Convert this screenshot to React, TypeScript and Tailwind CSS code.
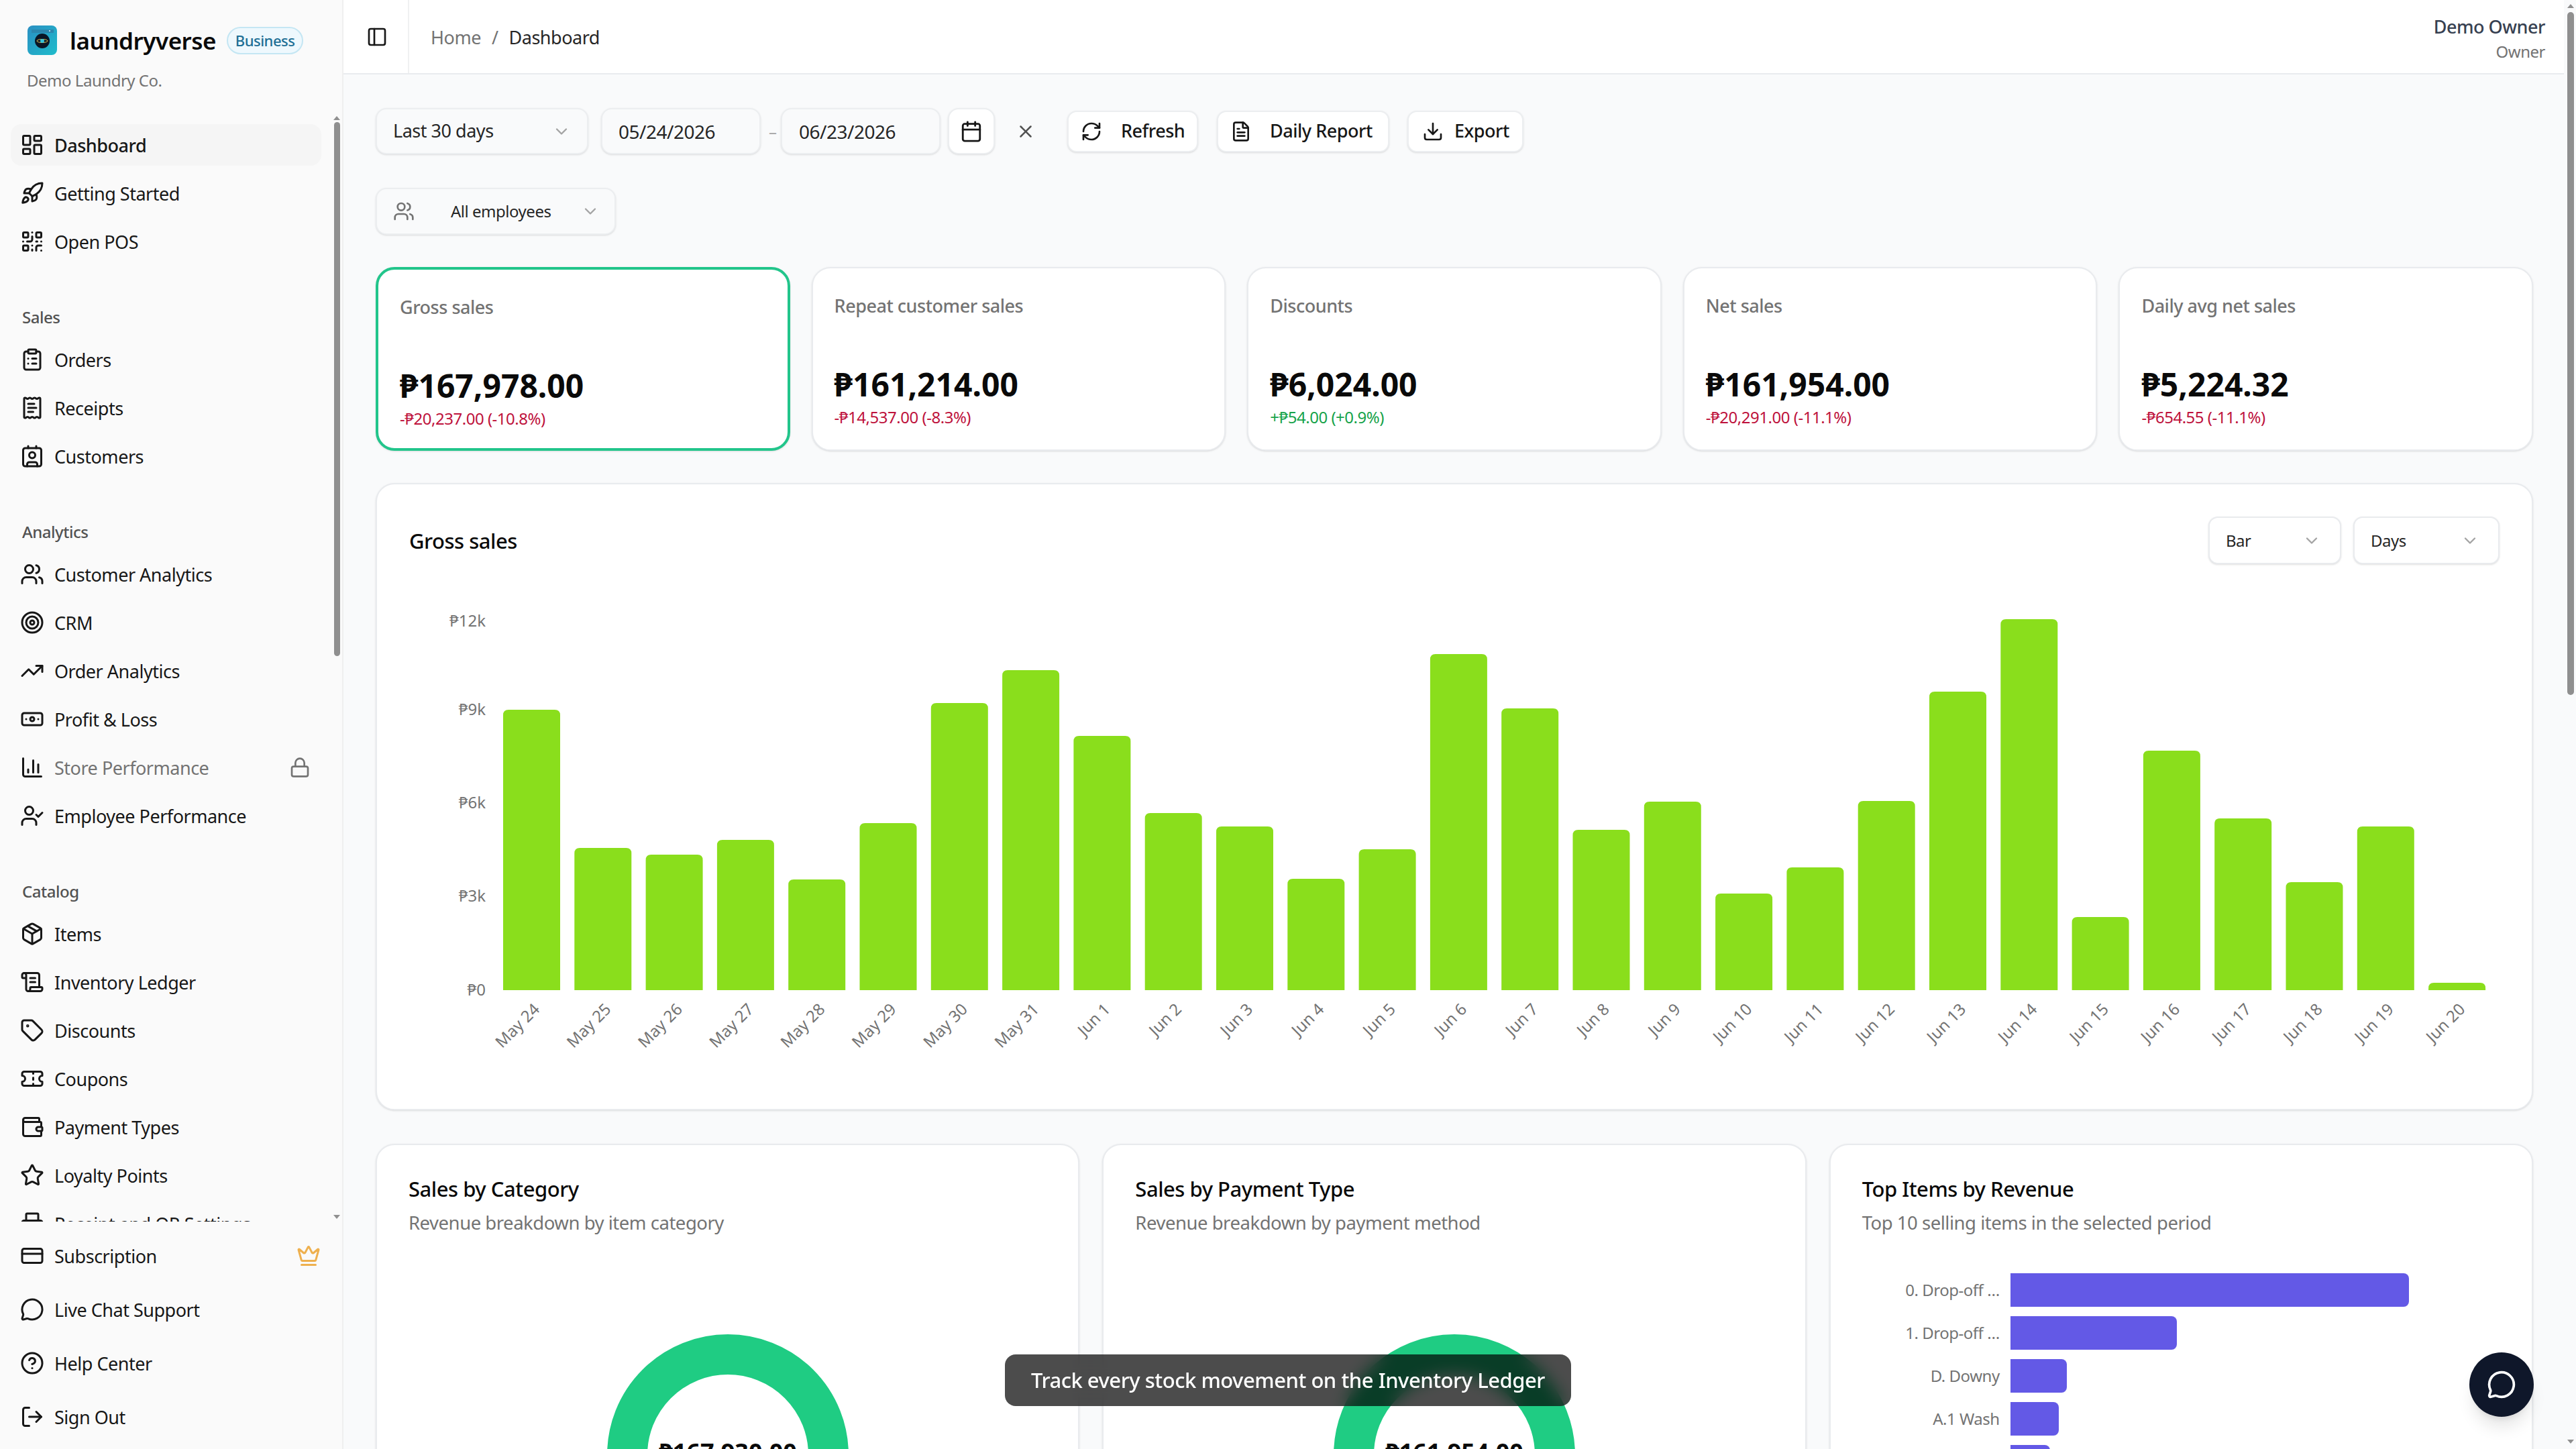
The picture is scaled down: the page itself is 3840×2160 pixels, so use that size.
import {
  LayoutDashboard, Rocket, QrCode, ClipboardList, ReceiptText, Contact, Users, Target, TrendingUp, Banknote,
  ChartColumn, UserCheck, Package, ScrollText, Tag, Ticket, Wallet, Star, Printer, CreditCard, MessageCircle,
  CircleHelp, LogOut, Crown, Lock, PanelLeft, Calendar, X, RefreshCw, FileText, Download, ChevronDown,
} from 'lucide-react';

const navGroups = [
  {
    label: '',
    items: [
      { name: 'Dashboard', icon: LayoutDashboard, active: true },
      { name: 'Getting Started', icon: Rocket },
      { name: 'Open POS', icon: QrCode },
    ],
  },
  {
    label: 'Sales',
    items: [
      { name: 'Orders', icon: ClipboardList },
      { name: 'Receipts', icon: ReceiptText },
      { name: 'Customers', icon: Contact },
    ],
  },
  {
    label: 'Analytics',
    items: [
      { name: 'Customer Analytics', icon: Users },
      { name: 'CRM', icon: Target },
      { name: 'Order Analytics', icon: TrendingUp },
      { name: 'Profit & Loss', icon: Banknote },
      { name: 'Store Performance', icon: ChartColumn, locked: true },
      { name: 'Employee Performance', icon: UserCheck },
    ],
  },
  {
    label: 'Catalog',
    items: [
      { name: 'Items', icon: Package },
      { name: 'Inventory Ledger', icon: ScrollText },
      { name: 'Discounts', icon: Tag },
      { name: 'Coupons', icon: Ticket },
      { name: 'Payment Types', icon: Wallet },
      { name: 'Loyalty Points', icon: Star },
      { name: 'Receipt and QR Settings', icon: Printer },
    ],
  },
];

const footerItems = [
  { name: 'Subscription', icon: CreditCard, crown: true },
  { name: 'Live Chat Support', icon: MessageCircle },
  { name: 'Help Center', icon: CircleHelp },
  { name: 'Sign Out', icon: LogOut },
];

const stats = [
  { label: 'Gross sales', value: '₱167,978.00', delta: '-₱20,237.00 (-10.8%)', up: false, selected: true },
  { label: 'Repeat customer sales', value: '₱161,214.00', delta: '-₱14,537.00 (-8.3%)', up: false },
  { label: 'Discounts', value: '₱6,024.00', delta: '+₱54.00 (+0.9%)', up: true },
  { label: 'Net sales', value: '₱161,954.00', delta: '-₱20,291.00 (-11.1%)', up: false },
  { label: 'Daily avg net sales', value: '₱5,224.32', delta: '-₱654.55 (-11.1%)', up: false },
];

const days = [
  'May 24', 'May 25', 'May 26', 'May 27', 'May 28', 'May 29', 'May 30', 'May 31',
  'Jun 1', 'Jun 2', 'Jun 3', 'Jun 4', 'Jun 5', 'Jun 6', 'Jun 7', 'Jun 8', 'Jun 9', 'Jun 10',
  'Jun 11', 'Jun 12', 'Jun 13', 'Jun 14', 'Jun 15', 'Jun 16', 'Jun 17', 'Jun 18', 'Jun 19', 'Jun 20',
];

// top edge of every bar, in page pixels
const barTops = [
  1058, 1264, 1274, 1252, 1311, 1227, 1048, 999, 1097, 1212, 1232, 1310, 1266, 975, 1056, 1237, 1195, 1332,
  1293, 1194, 1031, 923, 1367, 1119, 1220, 1315, 1232, 1465,
];

const ticks = [
  { label: '₱12k', y: 925 },
  { label: '₱9k', y: 1057 },
  { label: '₱6k', y: 1196 },
  { label: '₱3k', y: 1335 },
  { label: '₱0', y: 1475 },
];

const topItems = [
  { name: '0. Drop-off …', width: 594 },
  { name: '1. Drop-off …', width: 248 },
  { name: 'D. Downy', width: 84 },
  { name: 'A.1 Wash', width: 72 },
  { name: '', width: 59 },
];

const NavRow = ({ item }: { item: any }) => {
  const Icon = item.icon;
  return (
    <div className={`flex h-[62px] items-center gap-[15px] rounded-[16px] pl-[14px] pr-[16px] text-[27px] ${item.active ? 'bg-[#f5f5f5] font-medium text-[#171717]' : item.locked ? 'text-[#737373]' : 'text-[#171717]'}`}>
      <Icon size={36} strokeWidth={2} className="shrink-0 text-[#171717]" />
      <span className="flex-1 whitespace-nowrap pt-[2px]">{item.name}</span>
      {item.locked && <Lock size={32} strokeWidth={2} className="text-[#737373]" />}
    </div>
  );
};

const Sidebar = () => (
  <aside className="flex h-full w-[512px] shrink-0 flex-col border-r-2 border-[#efefef] bg-[#fafafa]">
    <div className="h-[160px] shrink-0 pl-[41px] pt-[38px]">
      <div className="flex items-center">
        <svg width="44" height="44" viewBox="0 0 44 44" className="shrink-0">
          <defs>
            <linearGradient id="logoBg" x1="0" y1="0" x2="1" y2="1">
              <stop offset="0" stopColor="#2a8fc2" />
              <stop offset="1" stopColor="#1fbccb" />
            </linearGradient>
          </defs>
          <rect width="44" height="44" rx="8" fill="url(#logoBg)" />
          <rect x="6" y="6" width="33" height="5" fill="#2b86ad" />
          <circle cx="33" cy="8" r="1" fill="#e6f6fb" />
          <circle cx="22" cy="23" r="11" fill="#0a1626" />
          <ellipse cx="22" cy="23" rx="8" ry="2.5" fill="none" stroke="#e3c34f" strokeWidth="1" />
          <circle cx="22" cy="23" r="3" fill="#35c2d9" />
        </svg>
        <span className="ml-[19px] text-[35px] font-semibold leading-none text-[#0a0a0a]">laundryverse</span>
        <span className="ml-[16px] flex h-[41px] w-[114px] items-center justify-center rounded-full border-2 border-[#c4e6f3] bg-[#eef8fd] text-[22px] font-medium text-[#1e6f95]">Business</span>
      </div>
      <div className="-ml-[1px] mt-[22px] text-[24px] leading-[32px] text-[#737373]">Demo Laundry Co.</div>
    </div>
    <div className="flex min-h-0 flex-1">
      <div className="h-[1661px] min-w-0 flex-1 overflow-hidden pl-[16px] pr-[15px] pt-[25px]">
        {navGroups.map((group) => (
          <div key={group.label} className={group.label ? 'mt-[58px]' : ''}>
            {group.label && <div className="mb-[8px] pl-[17px] text-[24px] font-medium leading-[48px] text-[#525252]">{group.label}</div>}
            <div className="flex flex-col gap-[10px]">
              {group.items.map((item) => (
                <NavRow key={item.name} item={item} />
              ))}
            </div>
          </div>
        ))}
      </div>
      <div className="flex h-[1661px] w-[16px] shrink-0 flex-col items-center pt-[13px]">
        <div className="h-0 w-0 border-x-[5px] border-b-[6px] border-x-transparent border-b-[#8f8f8f]" />
        <div className="mt-[3px] h-[796px] w-[9px] rounded-full bg-[#8f8f8f]" />
        <div className="flex-1" />
        <div className="mb-[4px] h-0 w-0 border-x-[5px] border-t-[6px] border-x-transparent border-t-[#8f8f8f]" />
      </div>
    </div>
    <div className="shrink-0 pb-[8px] pl-[16px] pr-[32px] pt-[3px]">
      {footerItems.map((item) => {
        const Icon = item.icon;
        return (
          <div key={item.name} className="flex h-[80px] items-center gap-[15px] pl-[14px] text-[27px] text-[#171717]">
            <Icon size={36} strokeWidth={2} className="shrink-0" />
            <span className="flex-1 pt-[2px]">{item.name}</span>
            {item.crown && <Crown size={36} strokeWidth={2} className="text-[#eeb04e]" />}
          </div>
        );
      })}
    </div>
  </aside>
);

const Header = () => (
  <header className="flex h-[111px] shrink-0 items-center border-b-2 border-[#e9ebee] bg-white">
    <div className="flex h-full w-[98px] items-center justify-center border-r-2 border-[#f0f1f2] pl-[4px]">
      <PanelLeft size={32} strokeWidth={2} className="text-[#171717]" />
    </div>
    <nav className="ml-[32px] flex items-center pt-[3px] text-[27px] text-[#737373]">
      <span>Home</span>
      <span className="mx-[16px]">/</span>
      <span className="text-[#262626]">Dashboard</span>
    </nav>
    <div className="ml-auto pr-[28px] pt-[6px] text-right">
      <div className="text-[27px] font-medium leading-[38px] text-[#374151]">Demo Owner</div>
      <div className="text-[24px] leading-[36px] text-[#737373]">Owner</div>
    </div>
  </header>
);

const Field = ({ className, children }: { className: string; children: React.ReactNode }) => (
  <div className={`flex items-center rounded-[16px] border-2 border-[#eceef0] bg-[#f9fafb] shadow-sm ${className}`}>{children}</div>
);

const ActionButton = ({ icon: Icon, label, className }: { icon: any; label: string; className: string }) => (
  <div className={`flex h-[62px] items-center rounded-[14px] border-2 border-[#eceef0] bg-white text-[27px] font-medium text-[#171717] shadow-sm ${className}`}>
    <Icon size={32} strokeWidth={2} className="shrink-0" />
    <span>{label}</span>
  </div>
);

const Filters = () => (
  <div className="flex shrink-0 flex-col gap-[50px]">
    <div className="flex items-center">
      <Field className="h-[69px] w-[317px] justify-between pl-[24px] pr-[24px] text-[27px] text-[#262626]">
        <span>Last 30 days</span>
        <ChevronDown size={28} className="text-[#a3a3a3]" />
      </Field>
      <Field className="ml-[19px] h-[69px] w-[238px] pl-[24px] text-[28px] text-[#262626]">05/24/2026</Field>
      <span className="mx-[12px] w-[6px] text-[24px] text-[#a3a3a3]">–</span>
      <Field className="h-[69px] w-[238px] pl-[25px] text-[28px] text-[#262626]">06/23/2026</Field>
      <Field className="ml-[11px] h-[69px] w-[70px] justify-center bg-white text-[#171717]">
        <Calendar size={34} strokeWidth={2} />
      </Field>
      <X size={30} strokeWidth={2} className="ml-[31px] text-[#525252]" />
      <ActionButton icon={RefreshCw} label="Refresh" className="ml-[47px] w-[195px] gap-[28px] pl-[18px]" />
      <ActionButton icon={FileText} label="Daily Report" className="ml-[28px] w-[257px] gap-[27px] pl-[18px]" />
      <ActionButton icon={Download} label="Export" className="ml-[27px] w-[173px] gap-[16px] pl-[20px]" />
    </div>
    <Field className="h-[70px] w-[358px] pl-[24px] pr-[22px] text-[24px] text-[#262626]">
      <Users size={32} strokeWidth={2} className="shrink-0 text-[#737373]" />
      <span className="ml-[54px] flex-1">All employees</span>
      <ChevronDown size={28} className="text-[#a3a3a3]" />
    </Field>
  </div>
);

const StatCards = () => (
  <div className="grid shrink-0 grid-cols-5 gap-[32px]">
    {stats.map((stat) => (
      <div
        key={stat.label}
        className={`h-[274px] rounded-[28px] bg-white pl-[32px] pt-[36px] shadow-sm ${stat.selected ? 'border-4 border-[#22c58b] pl-[30px] pt-[34px]' : 'border-2 border-[#e9ebee]'}`}
      >
        <div className="text-[27px] font-medium leading-[40px] text-[#737373]">{stat.label}</div>
        <div className="mt-[68px] text-[48px] font-bold leading-[58px] tracking-normal text-[#0a0a0a]">{stat.value}</div>
        <div className={`mt-[4px] text-[24px] leading-[32px] ${stat.up ? 'text-[#16a34a]' : 'text-[#be123c]'}`}>{stat.delta}</div>
      </div>
    ))}
  </div>
);

const SmallSelect = ({ label, className }: { label: string; className: string }) => (
  <div className={`flex h-[71px] items-center justify-between rounded-[14px] border-2 border-[#e9ebee] bg-white pl-[24px] pr-[28px] text-[24px] text-[#262626] shadow-sm ${className}`}>
    <span>{label}</span>
    <ChevronDown size={28} className="text-[#a3a3a3]" />
  </div>
);

const GrossChart = () => (
  <div className="h-[935px] shrink-0 rounded-[28px] border-2 border-[#e9ebee] bg-white shadow-sm">
    <div className="flex h-[138px] items-start justify-between pl-[48px] pr-[48px] pt-[48px]">
      <h2 className="text-[31px] font-medium leading-[72px] text-[#0a0a0a]">Gross sales</h2>
      <div className="flex gap-[18px]">
        <SmallSelect label="Bar" className="w-[198px]" />
        <SmallSelect label="Days" className="w-[218px]" />
      </div>
    </div>
    <svg width="3212" height="740" viewBox="562 860 3212 740" className="block tracking-normal">
      {ticks.map((tick) => (
        <text key={tick.label} x="724" y={tick.y + 9} textAnchor="end" fontSize="24" fill="#737373">{tick.label}</text>
      ))}
      {barTops.map((top, i) => {
        const x = 750 + 106.3 * i;
        return (
          <path
            key={days[i]}
            d={`M${x} 1476 V${top + 8} Q${x} ${top} ${x + 8} ${top} H${x + 77} Q${x + 85} ${top} ${x + 85} ${top + 8} V1476 Z`}
            fill="#8ade1c"
          />
        );
      })}
      {days.map((day, i) => {
        const x = 750 + 106.3 * i + 56;
        return (
          <text key={day} x={x} y={1506} textAnchor="end" fontSize="24" fill="#737373" transform={`rotate(-45 ${x} 1506)`}>{day}</text>
        );
      })}
    </svg>
  </div>
);

const Donut = ({ total }: { total: string }) => (
  <div className="mt-[146px] flex justify-center">
    <svg width="360" height="360" viewBox="0 0 360 360" className="tracking-normal">
      <circle cx="180" cy="180" r="150" fill="none" stroke="#1fcc83" strokeWidth="60" />
      <text x="180" y="189" textAnchor="middle" fontSize="36" fontWeight="700" fill="#0a0a0a">{total}</text>
    </svg>
  </div>
);

const PanelTitle = ({ title, sub }: { title: string; sub: string }) => (
  <>
    <h3 className="text-[31px] font-medium leading-[40px] text-[#0a0a0a]">{title}</h3>
    <p className="mt-[11px] text-[27.5px] leading-[40px] text-[#737373]">{sub}</p>
  </>
);

const BottomPanels = () => (
  <div className="mt-[2px] grid shrink-0 grid-cols-3 gap-[34px]">
    <div className="h-[800px] rounded-[28px] border-2 border-[#e9ebee] bg-white pl-[47px] pr-[47px] pt-[45px] shadow-sm">
      <PanelTitle title="Sales by Category" sub="Revenue breakdown by item category" />
      <Donut total="₱167,930.00" />
    </div>
    <div className="h-[800px] rounded-[28px] border-2 border-[#e9ebee] bg-white pl-[47px] pr-[47px] pt-[45px] shadow-sm">
      <PanelTitle title="Sales by Payment Type" sub="Revenue breakdown by payment method" />
      <Donut total="₱161,954.00" />
    </div>
    <div className="h-[800px] rounded-[28px] border-2 border-[#e9ebee] bg-white pl-[47px] pt-[45px] shadow-sm">
      <PanelTitle title="Top Items by Revenue" sub="Top 10 selling items in the selected period" />
      <div className="-ml-[1px] mt-[55px] flex flex-col gap-[14px]">
        {topItems.map((row) => (
          <div key={row.width} className="flex h-[50px] items-center">
            <span className="w-[222px] shrink-0 whitespace-nowrap pr-[16px] text-right text-[24px] text-[#737373]">{row.name}</span>
            <div className="h-full rounded-r-[8px] bg-[#6359e6]" style={{ width: row.width }} />
          </div>
        ))}
      </div>
    </div>
  </div>
);

const PageScrollbar = () => (
  <div className="flex h-full w-[18px] shrink-0 flex-col items-center bg-[#f9fafb] pl-[2px] pt-[6px]">
    <div className="h-0 w-0 border-x-[5px] border-b-[6px] border-x-transparent border-b-[#8f8f8f]" />
    <div className="mt-[6px] h-[1018px] w-[10px] rounded-full bg-[#8f8f8f]" />
    <div className="flex-1" />
    <div className="mb-[8px] h-0 w-0 border-x-[5px] border-t-[6px] border-x-transparent border-t-[#8f8f8f]" />
  </div>
);

export default function App() {
  return (
    <div className="relative flex h-[2160px] w-[3840px] overflow-hidden bg-[#f9fafb] font-['Noto_Sans',sans-serif] tracking-[-0.03em]">
      <Sidebar />
      <main className="flex min-w-0 flex-1 flex-col">
        <Header />
        <div className="flex min-h-0 flex-1 flex-col gap-[48px] overflow-hidden pl-[48px] pr-[46px] pt-[50px]">
          <Filters />
          <StatCards />
          <GrossChart />
          <BottomPanels />
        </div>
      </main>
      <PageScrollbar />
      <div className="absolute left-[1498px] top-[2019px] flex h-[77px] w-[844px] items-center justify-center rounded-[16px] bg-black/70 text-[31px] font-medium text-white backdrop-blur-md">
        Track every stock movement on the Inventory Ledger
      </div>
      <div className="absolute left-[3681px] top-[2016px] flex h-[96px] w-[96px] items-center justify-center rounded-full bg-[#0f172a] text-white shadow-xl">
        <MessageCircle size={44} strokeWidth={2} />
      </div>
    </div>
  );
}
